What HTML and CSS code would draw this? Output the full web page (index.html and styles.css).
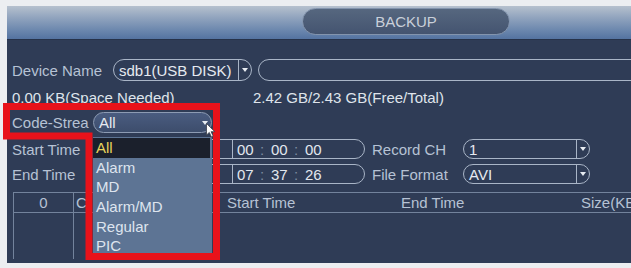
FILE: index.html
```html
<!DOCTYPE html>
<html>
<head>
<meta charset="utf-8">
<link rel="stylesheet" href="styles.css">
</head>
<body>
<div class="screen">
  <div class="window">
    <div class="titlebar"><div class="title-pill">BACKUP</div></div>
    <div class="panel">
      <div class="row r1">
        <span class="label w-dev">Device Name</span>
        <div class="select sel-dev"><span class="val">sdb1(USB DISK)</span><span class="arrow"><svg width="6" height="4" viewBox="0 0 6 4"><path d="M0 0H6L3 4Z" fill="#e8ecf2"/></svg></span></div>
        <div class="input-long"></div>
      </div>
      <div class="row r2">
        <span class="info w-space">0.00 KB(Space Needed)</span>
        <span class="info">2.42 GB/2.43 GB(Free/Total)</span>
      </div>
      <div class="row r3">
        <span class="label w-code">Code-Strea</span>
        <div class="select sel-code"><span class="val">All</span><span class="arrow noline"><svg width="6" height="4" viewBox="0 0 6 4"><path d="M0 0H6L3 4Z" fill="#e8ecf2"/></svg></span></div>
      </div>
      <div class="row r4">
        <span class="label w-time">Start Time</span>
        <div class="timefield"><span class="date"></span><span class="time"><span class="seg">00</span><span class="colon">:</span><span class="seg">00</span><span class="colon">:</span><span class="seg">00</span></span></div>
        <span class="label w-rec">Record CH</span>
        <div class="select sel-ch"><span class="val">1</span><span class="arrow"><svg width="6" height="4" viewBox="0 0 6 4"><path d="M0 0H6L3 4Z" fill="#e8ecf2"/></svg></span></div>
      </div>
      <div class="row r5">
        <span class="label w-time">End Time</span>
        <div class="timefield"><span class="date"></span><span class="time"><span class="seg">07</span><span class="colon">:</span><span class="seg">37</span><span class="colon">:</span><span class="seg">26</span></span></div>
        <span class="label w-rec">File Format</span>
        <div class="select sel-ch"><span class="val">AVI</span><span class="arrow"><svg width="6" height="4" viewBox="0 0 6 4"><path d="M0 0H6L3 4Z" fill="#e8ecf2"/></svg></span></div>
      </div>
      <div class="table">
        <div class="thead">
          <span class="th c0">0</span>
          <span class="th c1">C</span>
          <span class="th c2">Start Time</span>
          <span class="th c3">End Time</span>
          <span class="th c4">Size(KB</span>
        </div>
        <div class="tbody"><span class="td c0"></span></div>
      </div>
    </div>
  </div>

  <ul class="dropdown">
    <li class="item active">All</li>
    <li class="item">Alarm</li>
    <li class="item">MD</li>
    <li class="item">Alarm/MD</li>
    <li class="item">Regular</li>
    <li class="item">PIC</li>
  </ul>

  <svg class="redframe" width="631" height="268" viewBox="0 0 631 268">
    <path d="M6.5 106.5H216.5V256.5H89V136H6.5Z" fill="none" stroke="#e8121a" stroke-width="7" stroke-linejoin="miter"/>
  </svg>

  <svg class="cursor" width="10" height="15" viewBox="0 0 10 15">
    <path d="M0.5 0.5V12L3.3 9.4L5.4 14L7.2 13.2L5.1 8.7H8.8Z" fill="#ffffff" stroke="#3a3f4a" stroke-width="0.8"/>
  </svg>
</div>
</body>
</html>
```

FILE: styles.css
```css
* { box-sizing: border-box; }

body {
  margin: 0;
  font-family: "Liberation Sans", Arial, sans-serif;
  font-size: 15px;
}

.screen {
  position: relative;
  width: 631px;
  height: 268px;
  overflow: hidden;
  background: #eceef1;
  padding: 6px 0 0 7px;
}

.window {
  width: 624px;
  height: 257px;
  overflow: hidden;
  display: flex;
  flex-direction: column;
}

.titlebar {
  height: 34px;
  flex: none;
  background: linear-gradient(to bottom, #b6c1ce 0%, #91a4be 35%, #6a86ad 75%, #5473a1 100%);
  border-bottom: 1px solid #26324a;
  padding: 2px 0 0 295px;
}

.title-pill {
  width: 208px;
  height: 27px;
  border-radius: 14px;
  border: 1px solid #8394ad;
  background: linear-gradient(to bottom, #56677f, #445470);
  color: #c9d0da;
  display: flex;
  align-items: center;
  justify-content: center;
  font-size: 15px;
}

.panel {
  flex: 1;
  background: #2f3c56;
  padding: 19px 0 0 5px;
  display: flex;
  flex-direction: column;
}

.row {
  display: flex;
  align-items: center;
  flex: none;
}

.label, .info {
  color: #b6c2d4;
  white-space: nowrap;
  overflow: hidden;
  flex: none;
}

.info { color: #dfe4eb; }

.r1 { height: 22px; }
.r2 { height: 18px; margin-top: 7px; }
.r3 { height: 21px; margin-top: 6px; }
.r4 { height: 20px; margin-top: 6px; }
.r5 { height: 20px; margin-top: 5px; }

.w-dev { width: 101px; }
.w-space { width: 241px; }
.w-code { width: 81px; }
.w-time { width: 83px; }
.w-rec { width: 91px; margin-left: 7px; }

.select {
  display: flex;
  height: 100%;
  border: 1.5px solid #a9b5c7;
  border-radius: 11px;
  flex: none;
}

.select .val {
  flex: 1;
  padding-left: 5px;
  display: flex;
  align-items: center;
  color: #e6eaf0;
  white-space: nowrap;
}

.select .arrow {
  width: 13px;
  border-left: 1px solid #a9b5c7;
  display: flex;
  align-items: center;
  justify-content: center;
}

.select .arrow.noline { border-left: none; }

.sel-dev { width: 139px; }
.sel-code {
  width: 119px;
  background: linear-gradient(to bottom, #4a5c80, #3d4d6c);
  border-color: #8d9bb3;
}
.sel-ch { width: 127px; }

.input-long {
  margin-left: 6px;
  width: 420px;
  height: 100%;
  border: 1.5px solid #a9b5c7;
  border-radius: 11px;
  flex: none;
}

.timefield {
  width: 270px;
  height: 100%;
  border: 1.5px solid #a9b5c7;
  border-radius: 10px;
  display: flex;
  flex: none;
}

.timefield .date {
  width: 137px;
  border-right: 1px solid #a9b5c7;
}

.timefield .time {
  display: flex;
  align-items: center;
  padding-left: 4px;
  color: #e2e7ee;
}

.seg { width: 16px; text-align: left; }
.colon { width: 18px; text-align: center; color: #7e8ba0; }

.table {
  margin-top: 8px;
  margin-left: 1px;
  flex: 1;
  margin-bottom: 4px;
  border-left: 1px solid #73839c;
  border-top: 1px solid #73839c;
  display: flex;
  flex-direction: column;
}

.thead {
  height: 20px;
  border-bottom: 1px solid #73839c;
  display: flex;
  align-items: center;
  flex: none;
}

.th {
  color: #b6c2d4;
  white-space: nowrap;
  flex: none;
}

.c0 { width: 60px; text-align: center; border-right: 1px solid #73839c; height: 100%; display: flex; align-items: center; justify-content: center; }
.c1 { width: 151px; padding-left: 2px; }
.c2 { width: 176px; padding-left: 2px; }
.c3 { width: 180px; }
.c4 { width: 54px; }

.tbody {
  flex: 1;
  display: flex;
}

.td.c0 { height: 100%; }

.dropdown {
  position: absolute;
  left: 93px;
  top: 137px;
  width: 119px;
  height: 116px;
  margin: 0;
  padding: 1px 0 0 0;
  list-style: none;
  background: #5d7494;
  overflow: hidden;
}

.item {
  height: 19.7px;
  line-height: 19.7px;
  padding-left: 3px;
  color: #dde4ee;
  white-space: nowrap;
}

.item.active {
  background: #1b202c;
  color: #e8d45c;
  margin-right: 2px;
}

.redframe {
  position: absolute;
  left: 0;
  top: 0;
  pointer-events: none;
}

.cursor {
  position: absolute;
  left: 206px;
  top: 123px;
  pointer-events: none;
}
```
